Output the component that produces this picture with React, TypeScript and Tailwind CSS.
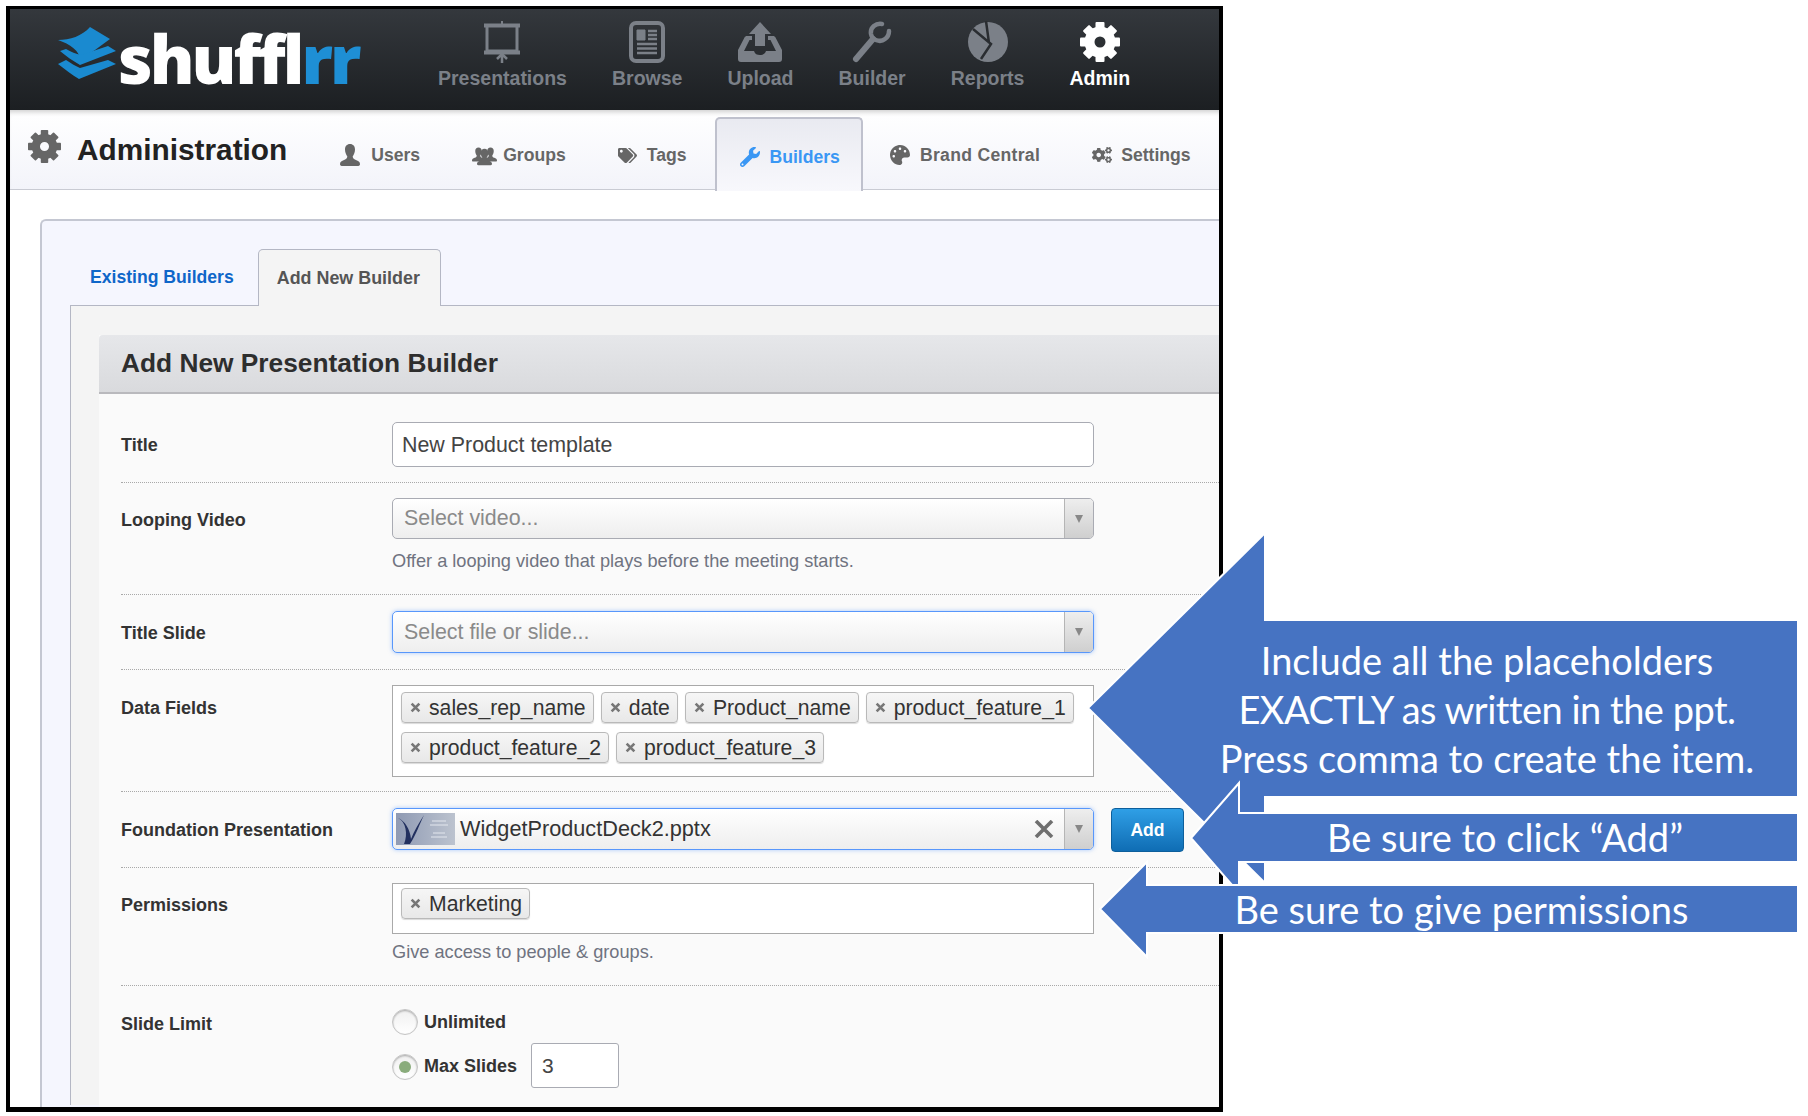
import { FaCogs, FaPalette, FaTags, FaWrench } from 'react-icons/fa';

const navIcon = 'w-[46px] h-[42px]';

function GearIcon({ size }: { size: number }) {
  const teeth = [0, 45, 90, 135, 180, 225, 270, 315];
  return (
    <svg viewBox="0 0 40 40" width={size} height={size} fill="currentColor">
      {teeth.map((deg) => (
        <rect key={deg} x="15.500" y="0" width="9" height="9" rx="1" transform={`rotate(${deg} 20 20)`} />
      ))}
      <circle cx="20" cy="20" r="10.500" fill="none" stroke="currentColor" strokeWidth="10" />
    </svg>
  );
}

function UserGlyph({ className }: { className: string }) {
  return (
    <svg viewBox="0 0 22 24" className={className} fill="currentColor">
      <path d="M11 0c3.500 0 5.500 2.500 5.500 6S15 12 14 13.500c0 2 1 3 3.500 4C20 18.500 22 19.500 22 22c0 1-.5 2-2 2H2c-1.500 0-2-1-2-2 0-2.500 2-3.500 4.500-4.500 2.500-1 3.500-2 3.500-4C7 12 5.500 9.500 5.500 6S7.500 0 11 0z" />
    </svg>
  );
}

function GroupGlyph() {
  return (
    <span className="relative block w-[25px] h-[21px] shrink-0">
      <UserGlyph className="absolute left-0 top-[2px] w-[13px] h-[15px]" />
      <UserGlyph className="absolute right-0 top-[2px] w-[13px] h-[15px]" />
      <UserGlyph className="absolute left-[5px] top-[3px] w-[15px] h-[18px]" />
    </span>
  );
}

function PresentationIcon() {
  return (
    <svg viewBox="0 0 46 42" className={navIcon} fill="none" stroke="currentColor">
      <path d="M5 4.500h36" strokeWidth="4" />
      <path d="M23 0v3" strokeWidth="2" />
      <path d="M8 6v24h30V6" strokeWidth="3" />
      <path d="M5 31.500h36" strokeWidth="4" />
      <path d="M23 33v9M18 38l5-5 5 5" strokeWidth="2.500" />
    </svg>
  );
}

function BrowseIcon() {
  return (
    <svg viewBox="0 0 46 42" className={navIcon} fill="none" stroke="currentColor">
      <rect x="7" y="2" width="32" height="38" rx="5" strokeWidth="4" />
      <path d="M13 9h8v10h-8z" fill="currentColor" strokeWidth="1" />
      <path d="M24 10h9M24 14h9M24 18h9M13 23h20M13 27.500h20M13 32h20" strokeWidth="2.500" />
    </svg>
  );
}

function UploadIcon() {
  return (
    <svg viewBox="0 0 46 42" className="w-[46px] h-[42px]" fill="currentColor">
      <path d="M23 1l11 12h-6v12H18V13h-6z" />
      <path d="M10 15h5v4h-2.500L7 30h10c1 3 3 4 6 4s5-1 6-4h10l-5.500-11H31v-4h5c1 0 2 .5 2.500 1.500L45 29v9c0 2-1 3-3 3H4c-2 0-3-1-3-3v-9l6.500-12.500C8 15.500 9 15 10 15z" />
    </svg>
  );
}

function WrenchIcon() {
  return (
    <svg viewBox="0 0 46 42" className={navIcon} fill="none" stroke="currentColor">
      <path d="M7 38l17-20" strokeWidth="6" strokeLinecap="round" />
      <path d="M33 3c-6-1-12 3-11 10 1 6 9 9 14 5 3-2 4-5 4-8" strokeWidth="4.500" strokeLinecap="round" />
    </svg>
  );
}

function PieIcon() {
  return (
    <svg viewBox="0 0 46 42" className={navIcon}>
      <circle cx="23" cy="21" r="20" fill="currentColor" />
      <path d="M8 8l18 15-10 15M21 0l3 22" fill="none" stroke="#2a2d31" strokeWidth="2.500" />
    </svg>
  );
}

function LogoMark() {
  return (
    <svg viewBox="0 0 60 52" className="w-[60px] h-[52px] shrink-0" fill="#1a8ad0">
      <path d="M0 13C12 13 24 9 32 0l20 12-15 11-15 10C22 24 12 17 0 13z" />
      <path d="M2 24l6-2c5 3 10 5 15 6l27-9 8 5-36 14C15 34 8 29 2 24z" />
      <path d="M0 37l8-4c5 3 9 6 14 8l28-8 8 4-37 15C14 48 7 42 0 37z" />
    </svg>
  );
}

function NavItem({ label, icon, active }: { label: string; icon: React.ReactNode; active?: boolean }) {
  return (
    <div className={`flex flex-col items-center ${active ? 'text-white' : 'text-[#7b8088]'}`}>
      <div className="h-[46px] flex items-center justify-center">{icon}</div>
      <span className="text-[19.500px] leading-[26px] font-bold">{label}</span>
    </div>
  );
}

function SubTab({ label, icon, gap, labelClass }: { label: string; icon: React.ReactNode; gap: string; labelClass?: string }) {
  return (
    <div className={`flex items-center px-[26px] pt-[4px] whitespace-nowrap text-[17.600px] font-bold text-[#666666] ${gap}`}>
      {icon}
      <span className={labelClass}>{label}</span>
    </div>
  );
}

function Chip({ label }: { label: string }) {
  return (
    <span className="flex items-center gap-[8px] h-[31px] pl-[8px] pr-[7px] rounded-[4px] border border-[#b9b9b9] bg-gradient-to-b from-[#f6f6f6] to-[#e8e8e8] shadow-[0_1px_1px_rgba(0,0,0,0.15)] text-[21.200px] text-[#333333]">
      <svg viewBox="0 0 10 10" className="w-[11px] h-[11px]" stroke="#777777" strokeWidth="2.400">
        <path d="M1.500 1.500l7 7M8.500 1.500l-7 7" />
      </svg>
      {label}
    </span>
  );
}

function Row({ label, className, labelOffset, children }: { label: string; className: string; labelOffset: string; children: React.ReactNode }) {
  return (
    <div className={`flex border-b border-dotted border-[#a9a9a9] ${className}`}>
      <div className={`w-[271px] shrink-0 text-[18px] leading-[24px] font-bold text-[#333333] ${labelOffset}`}>{label}</div>
      <div className="flex-1">{children}</div>
    </div>
  );
}

function SelectBox({ text, focused, thumb }: { text: string; focused?: boolean; thumb?: boolean }) {
  return (
    <div
      className={`flex w-[702px] rounded-[5px] border overflow-hidden bg-gradient-to-b from-white to-[#eeeeee] ${
        focused ? 'h-[42px] border-[#5897fb] shadow-[0_0_4px_rgba(88,151,251,0.5)]' : 'h-[41px] border-[#a9abb3]'
      }`}
    >
      {thumb && (
        <svg viewBox="0 0 59 32" className="w-[59px] h-[32px] ml-[3px] mt-[4px] shrink-0">
          <defs>
            <linearGradient id="thumbBg" x1="0" y1="0" x2="1" y2="0">
              <stop offset="0" stopColor="#8f9ab3" />
              <stop offset="1" stopColor="#bcc3cf" />
            </linearGradient>
          </defs>
          <rect width="59" height="32" fill="url(#thumbBg)" />
          <path d="M2 5c8 4 10 16 6 26h6C20 22 24 10 28 2c-5 8-10 16-13 24C14 16 9 8 2 5z" fill="#22305f" />
          <path d="M36 8h14M34 12h18M37 20h12M35 24h16" stroke="#e3e7ee" strokeWidth="1" />
        </svg>
      )}
      <span className={`flex-1 self-center ${thumb ? 'pl-[5px] text-[21.700px] text-[#333333]' : 'pl-[11px] text-[21.400px] text-[#8a8a8a]'}`}>{text}</span>
      {thumb && (
        <svg viewBox="0 0 20 18" className="w-[20px] h-[18px] self-center mr-[10px]" stroke="#6f6f6f" strokeWidth="3.600">
          <path d="M2 1l16 16M18 1L2 17" />
        </svg>
      )}
      <span className="w-[29px] shrink-0 border-l border-[#b5b5b5] bg-gradient-to-b from-[#eeeeee] to-[#cfcfcf] flex items-center justify-center">
        <svg viewBox="0 0 8 8" className="w-[8px] h-[8px]" fill="#888888">
          <path d="M0 0h8L4 8z" />
        </svg>
      </span>
    </div>
  );
}

export default function App() {
  return (
    <div className="relative w-[1808px] h-[1116px] bg-white overflow-hidden font-['Liberation_Sans',Arial,sans-serif]">
      <div className="absolute left-[6px] top-[6px] w-[1217px] h-[1106px] border-black border-t-[3px] border-l-4 border-r-4 border-b-[5px] overflow-hidden bg-white">
        {/* top bar */}
        <div className="flex h-[101px] bg-gradient-to-b from-[#34383d] to-[#1c1f22]">
          <div className="w-[428px] shrink-0 flex items-start pl-[48px] pt-[18px]">
            <LogoMark />
            <span className="font-['Open_Sans',sans-serif] font-extrabold text-[67px] leading-[62px] tracking-[-3px] text-white">
              shuffl<span className="text-[#1e8fd5]">rr</span>
            </span>
          </div>
          <div className="flex gap-[45px] pt-[10px]">
            <NavItem label="Presentations" icon={<PresentationIcon />} />
            <NavItem label="Browse" icon={<BrowseIcon />} />
            <NavItem label="Upload" icon={<UploadIcon />} />
            <NavItem label="Builder" icon={<WrenchIcon />} />
            <NavItem label="Reports" icon={<PieIcon />} />
            <NavItem label="Admin" active icon={<GearIcon size={40} />} />
          </div>
        </div>

        {/* admin tabs */}
        <div className="flex h-[80px] border-b border-[#c9cbd3] bg-gradient-to-b from-white to-[#f3f4fa] shadow-[inset_0_5px_5px_-3px_rgba(0,0,0,0.2)]">
          <div className="flex items-start pl-[18px] pt-[20px] text-[#666666]">
            <GearIcon size={33} />
            <span className="ml-[16px] mt-[2px] text-[29.800px] leading-[36px] font-bold text-[#222222]">Administration</span>
          </div>
          <div className="flex ml-[27px] mt-[7px]">
            <SubTab label="Users" gap="gap-[11px]" icon={<UserGlyph className="w-[20px] h-[22px]" />} />
            <SubTab label="Groups" gap="gap-[6px]" icon={<GroupGlyph />} />
            <SubTab label="Tags" gap="gap-[10px]" icon={<FaTags size={19} />} />
            <div className="flex items-center gap-[10px] ml-[2px] mr-[1px] pl-[23px] pr-[21px] pt-[4px] h-[74px] rounded-t-[5px] border-2 border-b-0 border-[#bfc1cd] bg-gradient-to-b from-[#e9eaf1] to-[#f8f8fc] text-[17.600px] font-bold text-[#3a97f4]">
              <FaWrench size={20} />
              <span>Builders</span>
            </div>
            <SubTab label="Brand Central" gap="gap-[10px]" labelClass="tracking-[0.3px]" icon={<FaPalette size={20} />} />
            <SubTab label="Settings" gap="gap-[9px]" icon={<FaCogs size={20} />} />
          </div>
        </div>

        {/* builder panel */}
        <div className="ml-[30px] mr-[-20px] mt-[29px] pt-[28px] pl-[28px] h-[900px] rounded-tl-[6px] border-l-2 border-t-2 border-[#c4c7d2] bg-[#f5f6fe]">
          <div className="flex h-[56px] pl-[1px]">
            <div className="pl-[19px] pr-[24px] pt-[16px] text-[17.600px] font-bold leading-[24px] text-[#0e66c9]">Existing Builders</div>
            <div className="relative z-10 w-[183px] h-[57px] pt-[16px] pl-[18px] rounded-t-[5px] border border-b-0 border-[#b4b7c4] bg-[#f4f4f4] text-[17.900px] font-bold leading-[24px] text-[#555555]">
              Add New Builder
            </div>
          </div>
          <div className="pl-[28px] pt-[29px] border-l border-t border-[#b4b7c4] bg-[#f4f4f4] h-[800px]">
            <div className="bg-[#fafafa] h-[780px]">
              <div className="h-[59px] pl-[22px] flex items-center rounded-t-[4px] border-b-2 border-[#b9b9bd] bg-gradient-to-b from-[#e6e7ea] to-[#d9dadd] text-[26.300px] font-bold text-[#2e2e2e]">
                Add New Presentation Builder
              </div>
              <div className="pl-[22px]">
                <Row label="Title" className="h-[89px] pt-[28px]" labelOffset="mt-[11px]">
                  <div className="w-[702px] h-[45px] pl-[9px] pt-[1px] flex items-center rounded-[5px] border border-[#a9abb3] bg-white text-[21.400px] text-[#444444]">
                    New Product template
                  </div>
                </Row>
                <Row label="Looping Video" className="h-[112px] pt-[15px]" labelOffset="mt-[10px]">
                  <SelectBox text="Select video..." />
                  <p className="mt-[10px] text-[18.200px] leading-[24px] text-[#6f7380]">Offer a looping video that plays before the meeting starts.</p>
                </Row>
                <Row label="Title Slide" className="h-[75px] pt-[16px]" labelOffset="mt-[10px]">
                  <SelectBox text="Select file or slide..." focused />
                </Row>
                <Row label="Data Fields" className="h-[122px] pt-[15px]" labelOffset="mt-[11px]">
                  <div className="w-[702px] h-[92px] border border-[#a9a9a9] bg-white pl-[8px] pt-[6px] flex flex-wrap content-start gap-x-[7px] gap-y-[9px]">
                    <Chip label="sales_rep_name" />
                    <Chip label="date" />
                    <Chip label="Product_name" />
                    <Chip label="product_feature_1" />
                    <Chip label="product_feature_2" />
                    <Chip label="product_feature_3" />
                  </div>
                </Row>
                <Row label="Foundation Presentation" className="h-[76px] pt-[16px]" labelOffset="mt-[10px]">
                  <div className="flex gap-[17px]">
                    <SelectBox text="WidgetProductDeck2.pptx" focused thumb />
                    <button className="w-[73px] h-[44px] rounded-[4px] border border-[#0d5f9c] bg-gradient-to-b from-[#2f9fe6] to-[#0f6db4] text-[17.600px] font-bold text-white">
                      Add
                    </button>
                  </div>
                </Row>
                <Row label="Permissions" className="h-[118px] pt-[15px]" labelOffset="mt-[10px]">
                  <div className="w-[702px] h-[51px] border border-[#a9a9a9] bg-white pl-[8px] pt-[4px]">
                    <div className="flex">
                      <Chip label="Marketing" />
                    </div>
                  </div>
                  <p className="mt-[6px] text-[18.200px] leading-[24px] text-[#6f7380]">Give access to people &amp; groups.</p>
                </Row>
                <div className="flex pt-[23px]">
                  <div className="w-[271px] shrink-0 mt-[3px] text-[18px] leading-[24px] font-bold text-[#333333]">Slide Limit</div>
                  <div className="flex flex-col">
                    <div className="flex items-center gap-[6px] h-[26px] text-[18px] font-bold text-[#333333]">
                      <span className="w-[26px] h-[26px] rounded-full border border-[#c4c4c4] bg-gradient-to-b from-[#f0f0f0] to-white shadow-[inset_0_1px_2px_rgba(0,0,0,0.3)]" />
                      Unlimited
                    </div>
                    <div className="flex items-center gap-[6px] mt-[8px] text-[18px] font-bold text-[#333333]">
                      <span className="mt-[2px] w-[26px] h-[26px] rounded-full border border-[#c4c4c4] bg-gradient-to-b from-[#f0f0f0] to-white shadow-[inset_0_1px_2px_rgba(0,0,0,0.3)] flex items-center justify-center">
                        <span className="w-[12px] h-[12px] rounded-full bg-[#8aac7c]" />
                      </span>
                      <span className="mt-[2px]">Max Slides</span>
                      <span className="ml-[8px] w-[88px] h-[45px] pl-[10px] flex items-center rounded-[3px] border border-[#a9abb3] bg-white text-[21px] font-normal text-[#444444]">3</span>
                    </div>
                  </div>
                </div>
              </div>
            </div>
          </div>
        </div>
      </div>

      {/* callout arrows */}
      <svg viewBox="0 0 1808 1116" className="absolute left-0 top-0 w-[1808px] h-[1116px]" fill="#4673c2" stroke="#ffffff" strokeWidth="2">
        <polygon points="1088,708 1265,533 1265,620 1798,620 1798,797 1265,797 1265,883" />
        <polygon points="1191,838 1239,783 1239,813 1798,813 1798,862 1239,862 1239,893" />
        <polygon points="1100,909 1147,862 1147,885 1798,885 1798,933 1147,933 1147,957" />
      </svg>
      <div className="absolute left-[1172px] top-[636px] w-[630px] text-center font-['Lato',sans-serif] text-[38px] leading-[49px] text-white">
        <p>Include all the placeholders</p>
        <p className="tracking-[-0.5px]">EXACTLY as written in the ppt.</p>
        <p>Press comma to create the item.</p>
      </div>
      <div className="absolute left-[1235px] top-[813px] w-[540px] h-[49px] flex items-center justify-center font-['Lato',sans-serif] text-[38px] text-white">
        Be sure to click “Add”
      </div>
      <div className="absolute left-[1143px] top-[885px] w-[637px] h-[48px] flex items-center justify-center font-['Lato',sans-serif] text-[38px] text-white">
        Be sure to give permissions
      </div>
    </div>
  );
}
